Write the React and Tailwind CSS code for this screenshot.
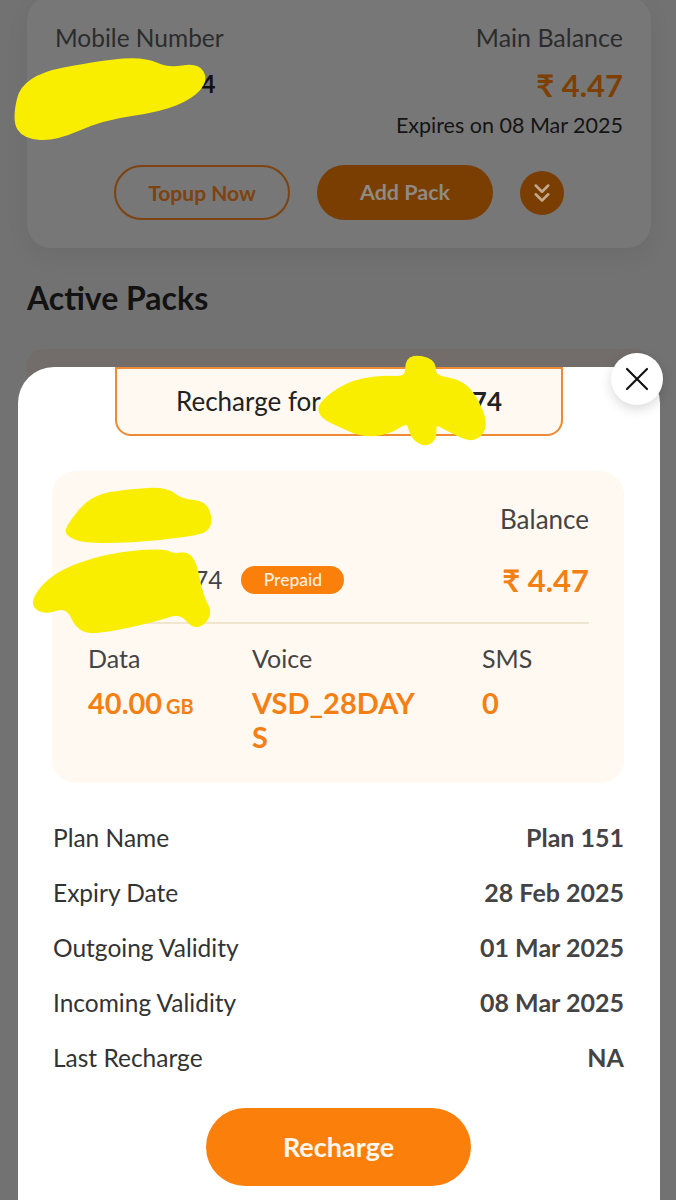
import React from 'react';
import { X, ChevronsDown } from 'lucide-react';

const rows = [
  ['Plan Name', 'Plan 151'],
  ['Expiry Date', '28 Feb 2025'],
  ['Outgoing Validity', '01 Mar 2025'],
  ['Incoming Validity', '08 Mar 2025'],
  ['Last Recharge', 'NA'],
];

// closed smooth curve through the midpoints of a marker outline
const smooth = (pts) => {
  const mid = (a, b) => [(a[0] + b[0]) / 2, (a[1] + b[1]) / 2];
  const start = mid(pts[pts.length - 1], pts[0]);
  let d = `M${start[0]} ${start[1]}`;
  pts.forEach((p, i) => {
    const m = mid(p, pts[(i + 1) % pts.length]);
    d += ` Q${p[0]} ${p[1]} ${m[0]} ${m[1]}`;
  });
  return d + ' Z';
};

const Scribble = ({ className, points, viewBox }) => (
  <svg
    className={`absolute overflow-visible ${className}`}
    viewBox={viewBox}
    fill="#f9ee00"
    stroke="#f9ee00"
    strokeWidth="6"
    strokeLinejoin="round"
  >
    <path d={smooth(points)} />
  </svg>
);

export default function App() {
  return (
    <div className="relative h-[1200px] w-[676px] overflow-hidden bg-[#727272] font-['Lato',sans-serif]">
      {/* page behind the dimmed overlay */}
      <div className="ml-[27px] mr-[25px] -mt-1 h-[252px] rounded-[24px] bg-[#777777] px-7 pt-[27px] shadow-[0_8px_24px_rgba(0,0,0,0.06)]">
        <div className="flex justify-between">
          <div className="text-[24.5px] leading-[30px] text-[#2c2c2c]">Mobile Number</div>
          <div className="flex flex-col items-end">
            <div className="-mt-px text-[25px] leading-[30px] text-[#2c2c2c]">Main Balance</div>
            <div className="mt-[15px] text-[31px] font-bold leading-[36px] text-[#7d3f03]">₹ 4.47</div>
            <div className="mt-[8px] text-[21.5px] leading-[28px] text-[#141414]">Expires on 08 Mar 2025</div>
          </div>
        </div>
        <div className="mt-[26px] flex items-center justify-center gap-[27px]">
          <div className="flex h-[55px] w-[176px] items-center justify-center rounded-full border-2 border-[#7d4310] text-[21px] font-bold text-[#7d4310]">
            Topup Now
          </div>
          <div className="flex h-[55px] w-[176px] items-center justify-center rounded-full bg-[#7a3e02] text-[21.5px] font-bold text-[#8f8a84]">
            Add Pack
          </div>
          <div className="flex h-[44px] w-[44px] items-center justify-center rounded-full bg-[#7a3e02]">
            <ChevronsDown size={30} strokeWidth={2} className="text-[#c4a98e]" />
          </div>
        </div>
      </div>
      <div className="mx-[27px] mt-[32px] text-[32px] font-bold leading-[36px] text-[#121212]">Active Packs</div>
      <div className="ml-[27px] mr-[25px] mt-[33px] h-[40px] rounded-t-[16px] bg-[#726d6a]" />

      {/* digit still visible next to the scribble */}
      <div className="absolute left-[201px] top-[68px] text-[25px] font-bold leading-[30px] text-[#111111]">4</div>
      <Scribble
        viewBox="0 0 191 78"
        className="left-[15px] top-[60px] h-[78px] w-[191px]"
        points={[[0, 60], [10, 18], [88, 3], [129, 0], [153, 11], [182, 6], [190, 20], [176, 36], [145, 49], [88, 57], [40, 78], [10, 76]]}
      />

      {/* bottom sheet */}
      <div className="absolute left-[18px] top-[367px] h-[833px] w-[642px] rounded-t-[36px] bg-white">
        <div className="mx-[97px] flex h-[69px] items-center rounded-b-[16px] border-2 border-[#ee8a33] bg-[#fff9f2] pl-[59px]">
          <span className="text-[26px] text-[#222222]">Recharge for</span>
          <span className="ml-auto pr-[59px] text-[26px] font-bold text-[#222222]">74</span>
        </div>

        <div className="ml-[34px] mr-[36px] mt-[35px] h-[312px] rounded-[24px] bg-[#fff9f2] pl-9 pr-[35px] pt-[33px]">
          <div className="flex justify-end text-[26px] leading-[30px] text-[#444444]">Balance</div>
          <div className="mt-[28px] flex h-[36px] items-center justify-between">
            <div className="flex items-center">
              <span className="ml-[106px] text-[24.5px] text-[#444444]">74</span>
              <span className="ml-[19px] flex h-[28px] w-[103px] items-center justify-center rounded-full bg-[#fb7f0b] text-[17.5px] font-medium text-[#fff1e2]">
                Prepaid
              </span>
            </div>
            <div className="text-[31px] font-bold text-[#f47f15]">₹ 4.47</div>
          </div>
          <div className="mt-[24px] h-[2px] bg-[#f0e6cf]" />
          <div className="mt-[19px] grid grid-cols-[164px_230px_1fr]">
            <div>
              <div className="text-[25px] leading-[30px] text-[#444444]">Data</div>
              <div className="mt-[13px] font-bold leading-[34px] text-[#f47f15]">
                <span className="text-[29px]">40.00</span> <span className="text-[20px]">GB</span>
              </div>
            </div>
            <div>
              <div className="text-[25px] leading-[30px] text-[#444444]">Voice</div>
              <div className="mt-[13px] w-[166px] break-all text-[29px] font-bold leading-[34px] text-[#f47f15]">VSD_28DAYS</div>
            </div>
            <div>
              <div className="text-[25px] leading-[30px] text-[#444444]">SMS</div>
              <div className="mt-[13px] text-[29px] font-bold leading-[34px] text-[#f47f15]">0</div>
            </div>
          </div>
        </div>

        <div className="ml-[35px] mr-[36px] mt-[40px] flex flex-col gap-[25px]">
          {rows.map(([label, value]) => (
            <div key={label} className="flex h-[30px] items-center justify-between">
              <span className="text-[24.5px] text-[#333333]">{label}</span>
              <span className="text-[25px] font-bold text-[#444444]">{value}</span>
            </div>
          ))}
        </div>

        <div className="mt-[35px] flex justify-center pr-[1px]">
          <div className="flex h-[78px] w-[265px] items-center justify-center rounded-full bg-[#fb7f0b] text-[27px] font-bold text-[#fff6ec]">
            Recharge
          </div>
        </div>
      </div>

      {/* close button */}
      <div className="absolute left-[611px] top-[353px] flex h-[52px] w-[52px] items-center justify-center rounded-full bg-white shadow-[0_4px_12px_rgba(0,0,0,0.15)]">
        <X size={40} strokeWidth={1.3} className="text-[#111111]" />
      </div>

      {/* scribbles over the sheet */}
      <Scribble
        viewBox="0 0 164 84"
        className="left-[320px] top-[358px] h-[84px] w-[164px]"
        points={[[0, 47], [27, 27], [59, 20], [88, 22], [88, 2], [100, 0], [113, 5], [113, 20], [138, 24], [153, 37], [166, 68], [153, 82], [132, 72], [113, 62], [114, 80], [105, 86], [93, 78], [89, 60], [68, 74], [42, 76], [20, 66], [3, 58]]}
      />
      <Scribble
        viewBox="0 0 140 50"
        className="left-[68px] top-[490px] h-[50px] w-[140px]"
        points={[[0, 38], [24, 8], [61, 2], [98, 0], [113, 12], [138, 14], [142, 38], [122, 44], [61, 50], [16, 50], [1, 44]]}
      />
      <Scribble
        viewBox="0 0 176 80"
        className="left-[32px] top-[550px] h-[80px] w-[176px]"
        points={[[0, 52], [24, 24], [76, 6], [132, 1], [140, 7], [160, 4], [168, 46], [178, 64], [164, 78], [149, 60], [123, 69], [71, 80], [48, 80], [36, 54], [12, 62]]}
      />
    </div>
  );
}
